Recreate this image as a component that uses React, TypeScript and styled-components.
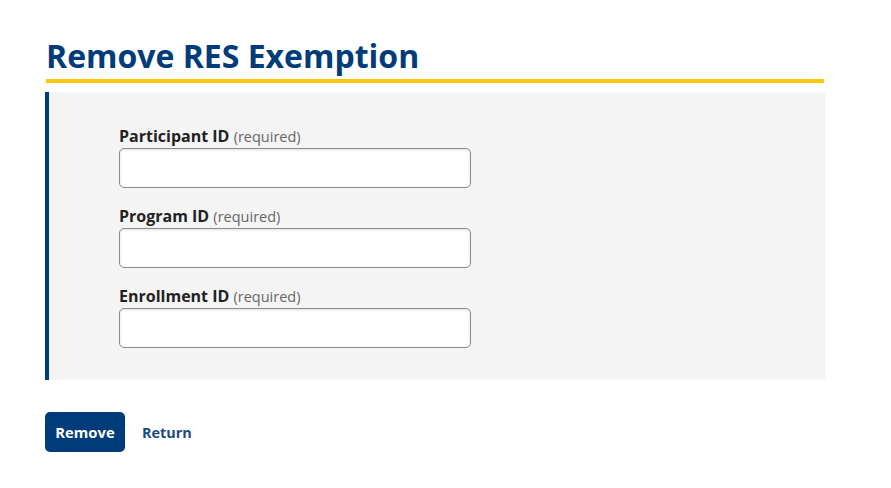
import React from "react";
import styled, { createGlobalStyle } from "styled-components";

const GlobalStyle = createGlobalStyle`
  html, body { margin: 0; padding: 0; background: #ffffff; }
  body { font-family: "Open Sans", "Liberation Sans", sans-serif; color: #222; }
`;

const Page = styled.main`
  width: 780px;
  padding: 36px 0 0 45px;
`;

const Title = styled.h1`
  margin: 0 1px 0 1px;
  font-size: 32px;
  line-height: 40px;
  font-weight: 700;
  color: #003b7a;
  border-bottom: 4px solid #ffc800;
  padding-bottom: 3px;
`;

const Panel = styled.section`
  margin-top: 9px;
  background: #f4f4f4;
  border-left: 4px solid #003b7a;
  padding: 34px 0 32px 70px;
  display: flex;
  flex-direction: column;
  gap: 18px;
`;

const Field = styled.div`
  display: flex;
  flex-direction: column;
`;

const Label = styled.label`
  display: block;
  height: 22px;
  font-size: 16px;
  line-height: 20px;
  font-weight: 700;
  color: #222;
`;

const Hint = styled.span`
  font-size: 14.5px;
  line-height: 1;
  font-weight: 400;
  color: #666;
`;

const Input = styled.input`
  box-sizing: border-box;
  width: 352px;
  height: 40px;
  border: 1px solid #8a8a8a;
  border-radius: 5px;
  background: #ffffff;
  box-shadow: inset 0 1px 3px rgba(0, 0, 0, 0.12);
  font-family: inherit;
  font-size: 15px;
  padding: 0 10px;
`;

const Actions = styled.div`
  display: flex;
  align-items: center;
  gap: 17px;
  margin-top: 32px;
`;

const PrimaryButton = styled.button`
  width: 80px;
  height: 40px;
  border: none;
  border-radius: 5px;
  background: #003b7a;
  color: #ffffff;
  font-family: inherit;
  font-size: 14.8px;
  font-weight: 700;
  cursor: pointer;
`;

const LinkButton = styled.a`
  font-size: 14.4px;
  font-weight: 700;
  color: #1b4a85;
  text-decoration: none;
  cursor: pointer;
`;

const fields = ["Participant ID", "Program ID", "Enrollment ID"];

export default function App() {
  return (
    <>
      <GlobalStyle />
      <Page>
        <Title>Remove RES Exemption</Title>
        <Panel>
          {fields.map((f) => (
            <Field key={f}>
              <Label>
                {f} <Hint>(required)</Hint>
              </Label>
              <Input type="text" />
            </Field>
          ))}
        </Panel>
        <Actions>
          <PrimaryButton>Remove</PrimaryButton>
          <LinkButton>Return</LinkButton>
        </Actions>
      </Page>
    </>
  );
}
